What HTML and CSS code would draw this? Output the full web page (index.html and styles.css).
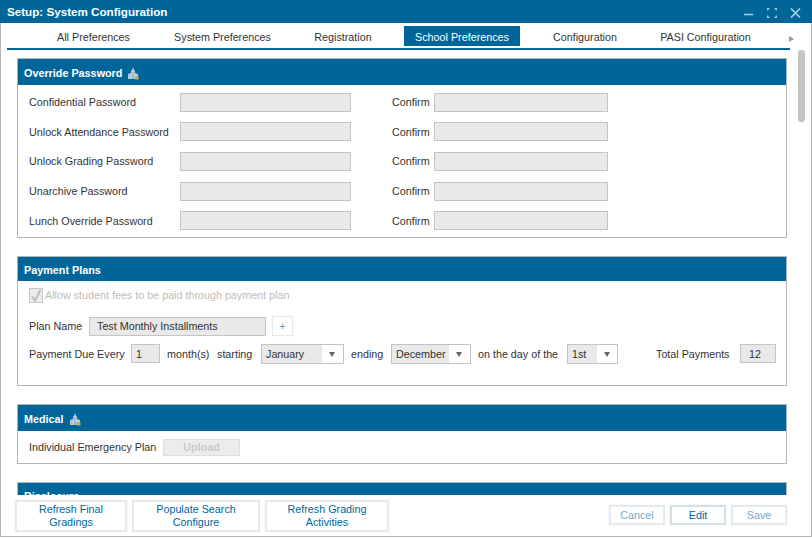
FILE: index.html
```html
<!DOCTYPE html>
<html lang="en">
<head>
<meta charset="utf-8">
<title>Setup: System Configuration</title>
<link rel="stylesheet" href="styles.css">
</head>
<body>
<svg class="defs" width="0" height="0" aria-hidden="true">
  <symbol id="bld" viewBox="0 0 12 14">
    <path d="M6 0.5 L6.6 3 L8 5 L8 7 L11 8 L11 13 L1 13 L1 8 L4 7 L4 5 L5.4 3 Z" fill="#b9ccd8"/>
    <path d="M2 9h1v1H2zM2 11h1v1H2zM5 6h2v1H5zM5 8h2v1H5zM5 10h2v3H5z" fill="#8fb1c6"/>
    <rect x="8" y="10" width="3.5" height="3.5" fill="#b9ad62"/>
  </symbol>
</svg>
<div class="window">
  <header class="titlebar">
    <h1 class="title">Setup: System Configuration</h1>
    <div class="controls">
      <svg width="9" height="10" viewBox="0 0 9 10"><path d="M0 6.500H9" stroke="#a9cbdd" stroke-width="1.600"/></svg>
      <svg width="10" height="10" viewBox="0 0 10 10" fill="none" stroke="#a9cbdd" stroke-width="1.300"><path d="M.7 2.500V.7H2.500M7.500 .7h1.800V2.500M9.300 7.500v1.800H7.500M2.500 9.300H.7V7.500"/></svg>
      <svg width="11" height="10" viewBox="0 0 11 10"><path d="M1 .5L10 9.500M10 .5L1 9.500" stroke="#a9cbdd" stroke-width="1.700"/></svg>
    </div>
  </header>
  <nav class="tabs">
    <a class="tab t1">All Preferences</a>
    <a class="tab t2">System Preferences</a>
    <a class="tab t3">Registration</a>
    <a class="tab active">School Preferences</a>
    <a class="tab t5">Configuration</a>
    <a class="tab t6">PASI Configuration</a>
    <span class="tab-more"></span>
  </nav>
  <main class="content">
    <section class="panel">
      <h2 class="panel-head tall">Override Password <svg class="bld" width="12" height="14"><use href="#bld"/></svg></h2>
      <div class="pw-grid">
        <label>Confidential Password</label><span class="field"></span><label class="conf">Confirm</label><span class="field wide"></span>
        <label>Unlock Attendance Password</label><span class="field"></span><label class="conf">Confirm</label><span class="field wide"></span>
        <label>Unlock Grading Password</label><span class="field"></span><label class="conf">Confirm</label><span class="field wide"></span>
        <label>Unarchive Password</label><span class="field"></span><label class="conf">Confirm</label><span class="field wide"></span>
        <label>Lunch Override Password</label><span class="field"></span><label class="conf">Confirm</label><span class="field wide"></span>
      </div>
    </section>
    <section class="panel pay">
      <h2 class="panel-head">Payment Plans</h2>
      <div class="check-row">
        <span class="check"><svg width="12" height="13" viewBox="0 0 12 13"><path d="M2 7.500L5 11.500L10.500 1" fill="none" stroke="#bdbdbd" stroke-width="2"/></svg></span>
        <span>Allow student fees to be paid through payment plan</span>
      </div>
      <div class="plan-row">
        <span class="l-plan">Plan Name</span>
        <span class="field plan">Test Monthly Installments</span>
        <button class="plus">+</button>
      </div>
      <div class="due-row">
        <span class="l-due">Payment Due Every</span>
        <span class="field num">1</span>
        <span class="l-month">month(s)</span>
        <span class="l-start">starting</span>
        <span class="select s-jan"><span class="sel-val">January</span><i class="arrow"></i></span>
        <span class="l-end">ending</span>
        <span class="select s-dec"><span class="sel-val">December</span><i class="arrow"></i></span>
        <span class="l-day">on the day of the</span>
        <span class="select s-day"><span class="sel-val">1st</span><i class="arrow"></i></span>
        <span class="l-total">Total Payments</span>
        <span class="field total">12</span>
      </div>
    </section>
    <section class="panel med">
      <h2 class="panel-head tall">Medical <svg class="bld" width="12" height="14"><use href="#bld"/></svg></h2>
      <div class="med-row">
        <span class="l-med">Individual Emergency Plan</span>
        <button class="upload">Upload</button>
      </div>
    </section>
    <section class="panel">
      <h2 class="panel-head tall clip">Disclosure</h2>
    </section>
    <div class="scrollbar"></div>
  </main>
  <footer class="footer">
    <div class="btn-left">
      <button class="btn b1">Refresh Final Gradings</button>
      <button class="btn b2">Populate Search Configure</button>
      <button class="btn b3">Refresh Grading Activities</button>
    </div>
    <div class="btn-right">
      <button class="btn sm dim">Cancel</button>
      <button class="btn sm edit">Edit</button>
      <button class="btn sm dim">Save</button>
    </div>
  </footer>
</div>
</body>
</html>
```
FILE: styles.css
```css
* { box-sizing: border-box; }
html, body { margin: 0; padding: 0; }
body { width: 812px; height: 538px; overflow: hidden; background: #fff; font: 10.750px "Liberation Sans", Arial, sans-serif; color: #333; }
.defs { position: absolute; }
.window { width: 812px; height: 537px; display: flex; flex-direction: column; border: 1px solid #b5b5b5; border-top: 0; background: #fff; }
.titlebar { flex: 0 0 23px; background: #006699; display: flex; align-items: center; justify-content: space-between; padding: 0 11px 0 7px; margin: 0 -1px; }
.title { margin: 0; font-size: 11.650px; font-weight: bold; color: #fff; }
.controls { display: flex; align-items: center; gap: 13.500px; padding-top: 3px; }
.controls svg { display: block; }
.tabs { flex: 0 0 27px; margin: 0 21px 0 6px; padding: 3px 0 0 0; border-bottom: 2px solid #006699; display: flex; height: 27px; }
.tab { flex: none; height: 20px; line-height: 22px; color: #333; text-align: center; white-space: nowrap; }
.t1 { margin-left: 50px; width: 73px; }
.t2 { margin-left: 44px; width: 97px; }
.t3 { margin-left: 43px; width: 58px; }
.active { margin-left: 32px; width: 116px; background: #006699; color: #fff; }
.t5 { margin-left: 33px; width: 64px; }
.t6 { margin-left: 43px; width: 91px; }
.tab-more { flex: none; width: 0; height: 0; margin: 10px 0 0 38px; border-left: 5px solid #999; border-top: 3px solid transparent; border-bottom: 3px solid transparent; }
.content { flex: 1 1 0; min-height: 0; position: relative; overflow: hidden; padding: 8px 24px 0 16px; }
.panel { border: 1px solid #b5b5b5; margin-bottom: 18px; }
.panel-head { margin: 0; height: 24px; background: #006699; color: #fff; font-size: 10.800px; font-weight: bold; padding: 1px 6px 0; display: flex; align-items: center; gap: 5px; }
.panel-head.tall { height: 26px; }
.panel-head.clip { padding: 0 6px 1px; }
.bld { display: block; }
.pw-grid { height: 152px; padding: 7.600px 0 0 11px; display: grid; grid-template-columns: 151px 171px 83px 174px; grid-auto-rows: 19px; row-gap: 10.700px; align-items: center; }
.pw-grid label { line-height: 12.200px; }
.conf { padding-left: 41px; grid-column: 3; width: 83px; }
.field { display: block; height: 19px; border: 1px solid #c4c4c4; background: #e9e9e9; color: #333; }
.pay { height: 130px; }
.check-row { display: flex; align-items: center; gap: 2px; height: 16px; margin: 6px 0 0 11px; color: #bdbdbd; }
.check { width: 14px; height: 15px; border: 1px solid #c8c8c8; background: #ececec; display: flex; align-items: center; justify-content: center; }
.plan-row { display: flex; align-items: center; margin: 13px 0 0 11px; height: 20px; }
.l-plan { width: 60px; }
.plan { width: 177px; height: 19px; line-height: 16px; padding-left: 7px; }
.plus { width: 21px; height: 20px; margin-left: 6px; padding: 0; border: 1px solid #e3e9ec; background: #fff; color: #6d9cb8; font: 11px "Liberation Sans", Arial, sans-serif; box-shadow: 0 0 1px #dbe5ea; }
.due-row { display: flex; align-items: flex-start; height: 20px; margin: 8px 0 0 11px; line-height: 20px; }
.l-due { width: 102px; }
.num { width: 29px; height: 19px; line-height: 18px; padding-left: 4px; }
.l-month { margin-left: 7px; width: 44px; }
.l-start { margin-left: 6px; width: 38px; }
.select { flex: none; height: 20px; border: 1px solid #c4c4c4; display: flex; background: #fff; }
.sel-val { background: #e9e9e9; padding-left: 4px; line-height: 18px; }
.arrow { width: 0; height: 0; margin: 7px 0 0 7px; border-top: 5px solid #666; border-left: 3px solid transparent; border-right: 3px solid transparent; }
.s-jan { width: 83px; margin-left: 6px; }
.s-jan .sel-val { width: 60px; }
.l-end { margin-left: 7px; width: 33px; }
.s-dec { width: 80px; margin-left: 7px; }
.s-dec .sel-val { width: 57px; }
.l-day { margin-left: 7px; width: 82px; }
.s-day { width: 51px; margin-left: 7px; }
.s-day .sel-val { width: 29px; }
.l-total { margin-left: 38px; width: 84px; }
.total { width: 36px; height: 19px; line-height: 18px; padding-left: 8px; }
.med { height: 60px; }
.med-row { display: flex; align-items: center; height: 32px; padding-left: 11px; }
.l-med { width: 134px; }
.upload { width: 77px; height: 17px; padding: 0; border: 1px solid #dedede; background: #ececec; color: #cacaca; font: bold 10.750px "Liberation Sans", Arial, sans-serif; }
.scrollbar { position: absolute; left: 797px; top: 0; width: 7px; height: 72px; background: #c4c4c4; border-radius: 3px; }
.footer { flex: 0 0 41px; display: flex; justify-content: space-between; align-items: flex-start; padding: 5px 24px 0 14px; background: #fff; }
.btn-left, .btn-right { display: flex; }
.btn-left { gap: 5px; }
.btn-right { gap: 5px; margin-top: 5px; }
.btn { background: #fff; border: 2px solid #e4eaed; color: #006699; font: 10.750px/13px "Liberation Sans", Arial, sans-serif; box-shadow: 0 0 1px #cfd9de; }
.b1 { width: 112px; height: 32px; padding: 0 12px; }
.b2 { width: 128px; height: 32px; padding: 0 20px; }
.b3 { width: 124px; height: 32px; padding: 0 18px; }
.sm { width: 56px; height: 20px; padding: 0; }
.dim { color: #75a9c6; }
.edit { border-color: #d6e0e4; }
```
